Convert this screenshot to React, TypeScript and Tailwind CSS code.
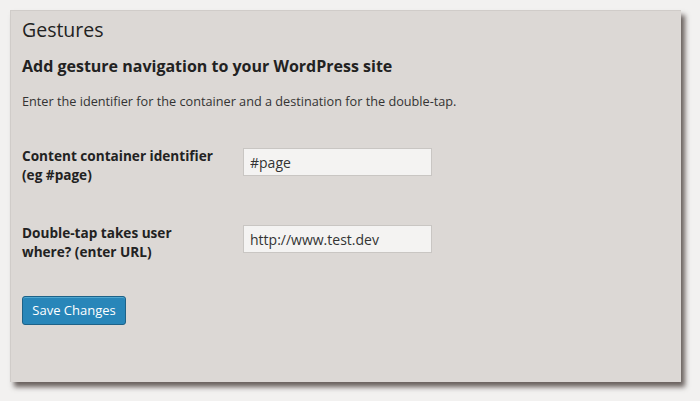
const Row = ({ lines, value }: { lines: string[]; value: string }) => (
  <div className="flex items-start">
    <label className="w-[221px] -mt-[1px] text-[13.6px] leading-[18.5px] font-bold text-[#222] whitespace-nowrap">
      {lines[0]}
      <br />
      {lines[1]}
    </label>
    <input
      type="text"
      defaultValue={value}
      className="w-[189px] h-[28px] px-[6px] bg-[#f4f3f2] border border-[#c9c6c3] text-[14px] text-[#333] outline-none"
    />
  </div>
);

export default function App() {
  return (
    <div className="w-[700px] h-[401px] bg-[#f2f1f0] pt-[10px] pl-[10px] font-['Open_Sans',sans-serif]">
      <div className="w-[671px] h-[372px] bg-[#dcd8d5] border-l border-t border-[#d0ccc9] shadow-[4px_5px_5px_rgba(60,50,45,0.75)] pt-[5px] pl-[11px]">
        <h1 className="text-[19.5px] leading-[28px] text-[#222]">Gestures</h1>
        <h2 className="mt-[10px] text-[16px] leading-[24px] font-bold text-[#222]">
          Add gesture navigation to your WordPress site
        </h2>
        <p className="mt-[13px] text-[12.7px] leading-[20px] text-[#333]">
          Enter the identifier for the container and a destination for the double-tap.
        </p>
        <div className="mt-[37px] flex flex-col gap-[41px]">
          <Row lines={["Content container identifier", "(eg #page)"]} value="#page" />
          <Row lines={["Double-tap takes user", "where? (enter URL)"]} value="http://www.test.dev" />
        </div>
        <button className="mt-[35px] w-[104px] h-[29px] rounded-[3px] bg-[#2886b9] border border-[#1d6288] text-white text-[13px] shadow-[inset_0_1px_0_rgba(120,200,230,0.5)]">
          Save Changes
        </button>
      </div>
    </div>
  );
}
